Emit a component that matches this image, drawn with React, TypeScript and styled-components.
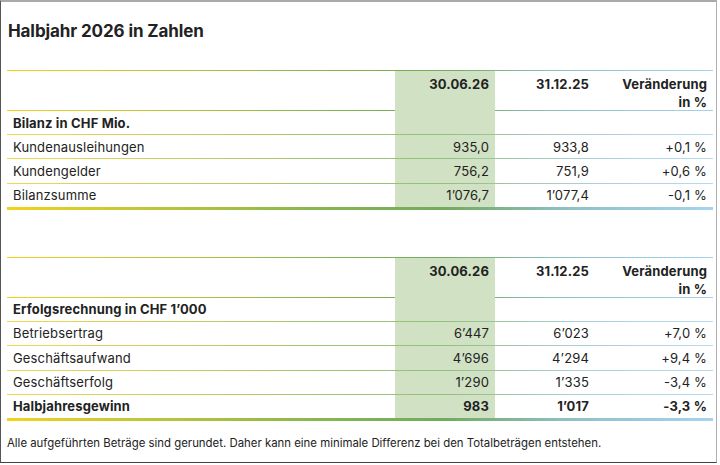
import styled, { createGlobalStyle } from "styled-components";

const GlobalStyle = createGlobalStyle`
  html, body {
    margin: 0;
    padding: 0;
    background: #ffffff;
  }
  body {
    font-family: Inter, "Liberation Sans", sans-serif;
    color: #222222;
  }
`;

const lineGradient =
  "linear-gradient(to right, #f3d31c 0%, #b9c53a 22%, #86b64f 45%, #72aa5f 62%, #8fc1c8 80%, #a6d3ee 100%)";

const softGradient =
  "linear-gradient(to right, #f0d94f 0%, #c8cf62 22%, #a0c474 45%, #93be7c 62%, #a8cfd2 80%, #b6dbf0 100%)";

const Frame = styled.div`
  box-sizing: border-box;
  width: 717px;
  height: 463px;
  border-top: 2px solid #a9a9a9;
  border-right: 1px solid #b0b0b0;
  border-left: 1px solid #555555;
  border-bottom: 1px solid #444444;
  padding: 0 3px 0 6px;
  display: flex;
  flex-direction: column;
`;

const Title = styled.h1`
  margin: 19px 0 0 1px;
  font-size: 17px;
  line-height: 20px;
  font-weight: 700;
  letter-spacing: -0.1px;
`;

const Table = styled.div<{ $gap: number }>`
  margin-top: ${(p) => p.$gap}px;
  display: flex;
  flex-direction: column;
  border-top: 1px solid;
  border-image: ${lineGradient} 1;
`;

const Row = styled.div<{ $height: number; $line: "soft" | "strong" | "thick" }>`
  display: grid;
  grid-template-columns: 388px 100px 100px 1fr;
  box-sizing: border-box;
  height: ${(p) => p.$height}px;
  border-bottom: ${(p) => (p.$line === "thick" ? 3 : 1)}px solid;
  border-image: ${(p) => (p.$line === "soft" ? softGradient : lineGradient)} 1;
`;

const Cell = styled.div<{ $align?: "left" | "right"; $bold?: boolean; $hl?: boolean }>`
  padding: 0 6px;
  display: flex;
  align-items: center;
  justify-content: ${(p) => (p.$align === "left" ? "flex-start" : "flex-end")};
  font-size: 13px;
  font-weight: ${(p) => (p.$bold ? 700 : 400)};
  background: ${(p) => (p.$hl ? "#d0e1c4" : "transparent")};
  white-space: nowrap;
  letter-spacing: 0.15px;
`;

const HeadCell = styled(Cell)`
  align-items: flex-start;
  padding-top: 4px;
  text-align: right;
  line-height: 18px;
  font-weight: 700;
  white-space: normal;
`;

const Footnote = styled.p`
  margin: 15px 0 0 0;
  font-size: 11.4px;
  line-height: 14px;
`;

type Line = { label: string; a: string; b: string; c: string; bold?: boolean };

const bilanz: Line[] = [
  { label: "Kundenausleihungen", a: "935,0", b: "933,8", c: "+0,1 %" },
  { label: "Kundengelder", a: "756,2", b: "751,9", c: "+0,6 %" },
  { label: "Bilanzsumme", a: "1\u2019076,7", b: "1\u2019077,4", c: "-0,1 %" },
];

const erfolg: Line[] = [
  { label: "Betriebsertrag", a: "6\u2019447", b: "6\u2019023", c: "+7,0 %" },
  { label: "Geschäftsaufwand", a: "4\u2019696", b: "4\u2019294", c: "+9,4 %" },
  { label: "Geschäftserfolg", a: "1\u2019290", b: "1\u2019335", c: "-3,4 %" },
  { label: "Halbjahresgewinn", a: "983", b: "1\u2019017", c: "-3,3 %", bold: true },
];

function FigureTable({ title, lines, gap }: { title: string; lines: Line[]; gap: number }) {
  return (
    <Table $gap={gap}>
      <Row $height={40} $line="strong">
        <HeadCell $align="left" />
        <HeadCell $hl>30.06.26</HeadCell>
        <HeadCell>31.12.25</HeadCell>
        <HeadCell>
          Veränderung
          <br />
          in %
        </HeadCell>
      </Row>
      <Row $height={24} $line="soft">
        <Cell $align="left" $bold>
          {title}
        </Cell>
        <Cell $hl />
        <Cell />
        <Cell />
      </Row>
      {lines.map((l, i) => {
        const last = i === lines.length - 1;
        return (
          <Row key={l.label} $height={last ? 26 : 24.4} $line={last ? "thick" : "soft"}>
            <Cell $align="left" $bold={l.bold}>
              {l.label}
            </Cell>
            <Cell $hl $bold={l.bold}>
              {l.a}
            </Cell>
            <Cell $bold={l.bold}>{l.b}</Cell>
            <Cell $bold={l.bold}>{l.c}</Cell>
          </Row>
        );
      })}
    </Table>
  );
}

export default function App() {
  return (
    <>
      <GlobalStyle />
      <Frame>
        <Title>Halbjahr 2026 in Zahlen</Title>
        <FigureTable title="Bilanz in CHF Mio." lines={bilanz} gap={29} />
        <FigureTable title={"Erfolgsrechnung in CHF 1\u2019000"} lines={erfolg} gap={47} />
        <Footnote>
          Alle aufgeführten Beträge sind gerundet. Daher kann eine minimale Differenz bei den Totalbeträgen entstehen.
        </Footnote>
      </Frame>
    </>
  );
}
